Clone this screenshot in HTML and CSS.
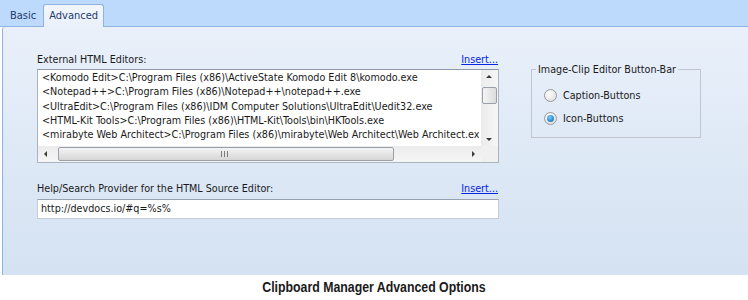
FILE: index.html
```html
<!DOCTYPE html>
<html lang="en">
<head>
    <meta charset="UTF-8">
    <title>Clipboard Manager Advanced Options</title>
    <link rel="stylesheet" href="styles.css">
</head>
<body>
    <div class="tabbar">
        <div class="tab">Basic</div>
        <div class="tab active">Advanced</div>
    </div>
    <div class="panel">
        <div class="left">
            <div class="label-row">
                <span>External HTML Editors:</span>
                <a class="insert" href="#">Insert...</a>
            </div>
            <div class="editbox">
                <div class="lines">
                    <div>&lt;Komodo Edit&gt;C:\Program Files (x86)\ActiveState Komodo Edit 8\komodo.exe</div>
                    <div>&lt;Notepad++&gt;C:\Program Files (x86)\Notepad++\notepad++.exe</div>
                    <div>&lt;UltraEdit&gt;C:\Program Files (x86)\IDM Computer Solutions\UltraEdit\Uedit32.exe</div>
                    <div>&lt;HTML-Kit Tools&gt;C:\Program Files (x86)\HTML-Kit\Tools\bin\HKTools.exe</div>
                    <div>&lt;mirabyte Web Architect&gt;C:\Program Files (x86)\mirabyte\Web Architect\Web Architect.exe</div>
                </div>
                <div class="vscroll">
                    <span class="arrow up"></span>
                    <span class="vthumb"></span>
                    <span class="arrow down"></span>
                </div>
                <div class="hscroll">
                    <span class="arrow left"></span>
                    <span class="hthumb"><span class="grip"></span></span>
                    <span class="arrow right"></span>
                </div>
                <div class="corner"></div>
            </div>
            <div class="label-row second">
                <span>Help/Search Provider for the HTML Source Editor:</span>
                <a class="insert" href="#">Insert...</a>
            </div>
            <div class="inputbox">http://devdocs.io/#q=%s%</div>
        </div>
        <fieldset class="group">
            <legend>Image-Clip Editor Button-Bar</legend>
            <label class="radio"><span class="dot"></span>Caption-Buttons</label>
            <label class="radio"><span class="dot checked"></span>Icon-Buttons</label>
        </fieldset>
    </div>
    <div class="caption"><span>Clipboard Manager Advanced Options</span></div>
</body>
</html>
```

FILE: styles.css
```css
body {
    margin: 0;
    width: 748px;
    height: 300px;
    overflow: hidden;
    font-family: "DejaVu Sans", Tahoma, sans-serif;
    font-stretch: condensed;
    font-size: 10.7px;
    color: #1a1a1a;
    background: #fff;
}
.tabbar {
    height: 26px;
    background: #bdd9fb;
    border-bottom: 1px solid #8db2e3;
    display: flex;
    align-items: flex-end;
    padding-left: 4px;
}
.tab {
    height: 21px;
    line-height: 21px;
    padding: 0 6px;
    color: #1e3a6e;
    font-size: 11px;
}
.tab.active {
    background: linear-gradient(#f2f7fd, #e9f0fa);
    border: 1px solid #8db2e3;
    border-bottom: none;
    border-radius: 3px 3px 0 0;
    height: 22px;
    margin-bottom: -1px;
    padding: 0 5px;
    margin-left: 1px;
}
.panel {
    height: 248px;
    margin-left: 2px;
    border-left: 1px solid #8db2e3;
    border-top-left-radius: 3px;
    background: linear-gradient(#e9f0fa, #d4e2f2);
    display: flex;
    align-items: flex-start;
    padding: 26px 0 0 34px;
    box-sizing: border-box;
}
.left {
    width: 462px;
}
.label-row {
    display: flex;
    justify-content: space-between;
    height: 16px;
    line-height: 14px;
}
.label-row.second {
    margin-top: 19px;
    height: 17px;
}
.insert {
    color: #0026e6;
    text-decoration: underline;
    margin-right: 1px;
}
.editbox {
    position: relative;
    height: 94px;
    background: #fff;
    border: 1px solid #abb3c0;
    border-top-color: #8e97a6;
    box-sizing: border-box;
    overflow: hidden;
}
.lines {
    padding: 1px 0 0 4px;
    white-space: nowrap;
    line-height: 14.3px;
    width: 437px;
    overflow: hidden;
}
.vscroll {
    position: absolute;
    right: 0;
    top: 0;
    width: 17px;
    height: 76px;
    background: linear-gradient(90deg, #ebebeb, #f6f6f6);
}
.hscroll {
    position: absolute;
    left: 0;
    bottom: 0;
    width: 443px;
    height: 16px;
    background: linear-gradient(#ebebeb, #f6f6f6);
}
.corner {
    position: absolute;
    right: 0;
    bottom: 0;
    width: 17px;
    height: 16px;
    background: #f0f0f0;
}
.arrow {
    position: absolute;
    width: 0;
    height: 0;
    border: 3px solid transparent;
}
.arrow.up { left: 5px; top: 5px; border-bottom: 3px solid #3a3a3a; border-top: 0; }
.arrow.down { left: 5px; bottom: 5px; border-top: 3px solid #3a3a3a; border-bottom: 0; }
.arrow.left { left: 6px; top: 5px; border-right: 3px solid #3a3a3a; border-left: 0; }
.arrow.right { right: 6px; top: 5px; border-left: 3px solid #3a3a3a; border-right: 0; }
.vthumb {
    position: absolute;
    left: 1px;
    top: 17px;
    width: 13px;
    height: 15px;
    border: 1px solid #9aa0a8;
    border-radius: 2px;
    background: linear-gradient(90deg, #f4f4f4, #dcdcdc);
}
.hthumb {
    position: absolute;
    left: 20px;
    top: 1px;
    width: 334px;
    height: 12px;
    border: 1px solid #9aa0a8;
    border-radius: 2px;
    background: linear-gradient(#f4f4f4, #d6d6d6);
}
.grip {
    position: absolute;
    left: 162px;
    top: 3px;
    width: 7px;
    height: 6px;
    background: repeating-linear-gradient(90deg, #7c7c7c 0 1px, transparent 1px 3px);
}
.inputbox {
    height: 20px;
    line-height: 18px;
    padding-left: 3px;
    background: #fff;
    border: 1px solid #c6ccd6;
    border-top-color: #9aa2b0;
    box-sizing: border-box;
}
.group {
    margin: 10px 0 0 32px;
    width: 170px;
    height: 75px;
    box-sizing: border-box;
    border: 1px solid #c2c6cc;
    padding: 8px 0 0 12px;
}
.group legend {
    padding: 0 2px;
    margin-left: -8px;
}
.radio {
    display: flex;
    align-items: center;
    height: 23px;
}
.dot {
    width: 11px;
    height: 11px;
    border-radius: 50%;
    border: 1px solid #9a9a9a;
    background: radial-gradient(circle at 40% 35%, #ffffff, #d8d8d8);
    margin-right: 6px;
    position: relative;
}
.dot.checked::after {
    content: "";
    position: absolute;
    left: 2px;
    top: 2px;
    width: 7px;
    height: 7px;
    border-radius: 50%;
    background: radial-gradient(circle at 40% 35%, #6fd0ff, #0a5fa8);
}
.caption {
    text-align: center;
    font-family: "Liberation Sans", Arial, sans-serif;
    font-weight: bold;
    font-size: 14px;
    line-height: 25px;
    height: 25px;
}
.caption span {
    display: inline-block;
    transform: scaleX(0.88);
}
```
